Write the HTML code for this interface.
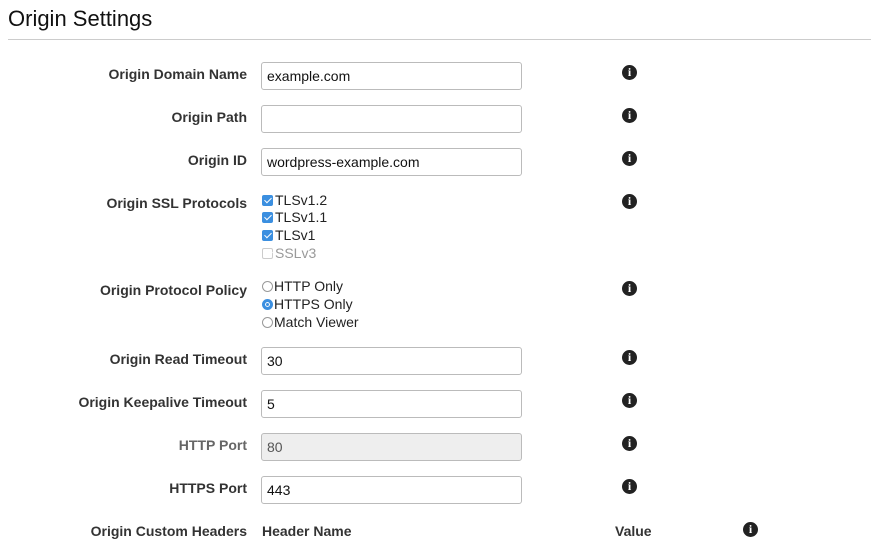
<!DOCTYPE html>
<html><head><style>
body{margin:0;background:#fff;font-family:"Liberation Sans",Arial,sans-serif;color:#222;width:871px;height:545px;overflow:hidden;position:relative}
.h{position:absolute;left:8px;top:6px;font-size:22px;color:#111}
.hr{position:absolute;left:8px;right:0;top:39px;border-top:1px solid #ccc}
.l{position:absolute;right:624px;font-size:14px;font-weight:bold;color:#333;white-space:nowrap}
.in{position:absolute;left:261px;border:1px solid #bbb;border-radius:3px;font-size:14px;line-height:26px;padding-left:5px;box-sizing:border-box;width:261px;height:28px;color:#111}
.i{position:absolute;left:622px;width:15px;height:15px;border-radius:50%;background:#222;color:#fff;font:bold 12px/15px "Liberation Serif",serif;text-align:center}
.o{position:absolute;left:262px;font-size:14px;color:#222;white-space:nowrap}
.cb{display:inline-block;width:11px;height:11px;border-radius:2px;background:#3b8fe0;vertical-align:-1px;margin-right:2px;position:relative}
.cb:after{content:"";position:absolute;left:3.5px;top:1px;width:3px;height:6px;border:solid #fff;border-width:0 1.5px 1.5px 0;transform:rotate(45deg)}
.rb{display:inline-block;width:11px;height:11px;border-radius:50%;border:1px solid #999;box-sizing:border-box;vertical-align:-1px;margin-right:1px}
</style></head><body>
<div class="h">Origin Settings</div><div class="hr"></div>

<div class="l" style="top:66px">Origin Domain Name</div><div class="in" style="top:62px">example.com</div><div class="i" style="top:65px">i</div>
<div class="l" style="top:109px">Origin Path</div><div class="in" style="top:105px"></div><div class="i" style="top:108px">i</div>
<div class="l" style="top:152px">Origin ID</div><div class="in" style="top:148px">wordpress-example.com</div><div class="i" style="top:151px">i</div>
<div class="l" style="top:195px">Origin SSL Protocols</div><div class="i" style="top:194px">i</div>
<div class="o" style="top:192px"><span class="cb"></span>TLSv1.2</div>
<div class="o" style="top:209px"><span class="cb"></span>TLSv1.1</div>
<div class="o" style="top:227px"><span class="cb"></span>TLSv1</div>
<div class="o" style="top:245px;color:#999"><span class="cb" style="background:#fff;border:1px solid #ccc;box-sizing:border-box"></span>SSLv3</div>
<div class="l" style="top:282px">Origin Protocol Policy</div><div class="i" style="top:281px">i</div>
<div class="o" style="top:278px"><span class="rb"></span>HTTP Only</div>
<div class="o" style="top:296px"><span class="rb" style="background:#3b8fe0;border:3px solid #3b8fe0;box-shadow:inset 0 0 0 1px #fff"></span>HTTPS Only</div>
<div class="o" style="top:314px"><span class="rb"></span>Match Viewer</div>
<div class="l" style="top:351px">Origin Read Timeout</div><div class="in" style="top:347px">30</div><div class="i" style="top:350px">i</div>
<div class="l" style="top:394px">Origin Keepalive Timeout</div><div class="in" style="top:390px">5</div><div class="i" style="top:393px">i</div>
<div class="l" style="top:437px;color:#666">HTTP Port</div><div class="in" style="top:433px;background:#eee;color:#555">80</div><div class="i" style="top:436px">i</div>
<div class="l" style="top:480px">HTTPS Port</div><div class="in" style="top:476px">443</div><div class="i" style="top:479px">i</div>
<div class="l" style="top:523px">Origin Custom Headers</div>
<div class="o" style="top:523px;font-weight:bold;color:#333">Header Name</div>
<div class="o" style="top:523px;left:615px;font-weight:bold;color:#333">Value</div>
<div class="i" style="top:522px;left:743px">i</div>
</body></html>
